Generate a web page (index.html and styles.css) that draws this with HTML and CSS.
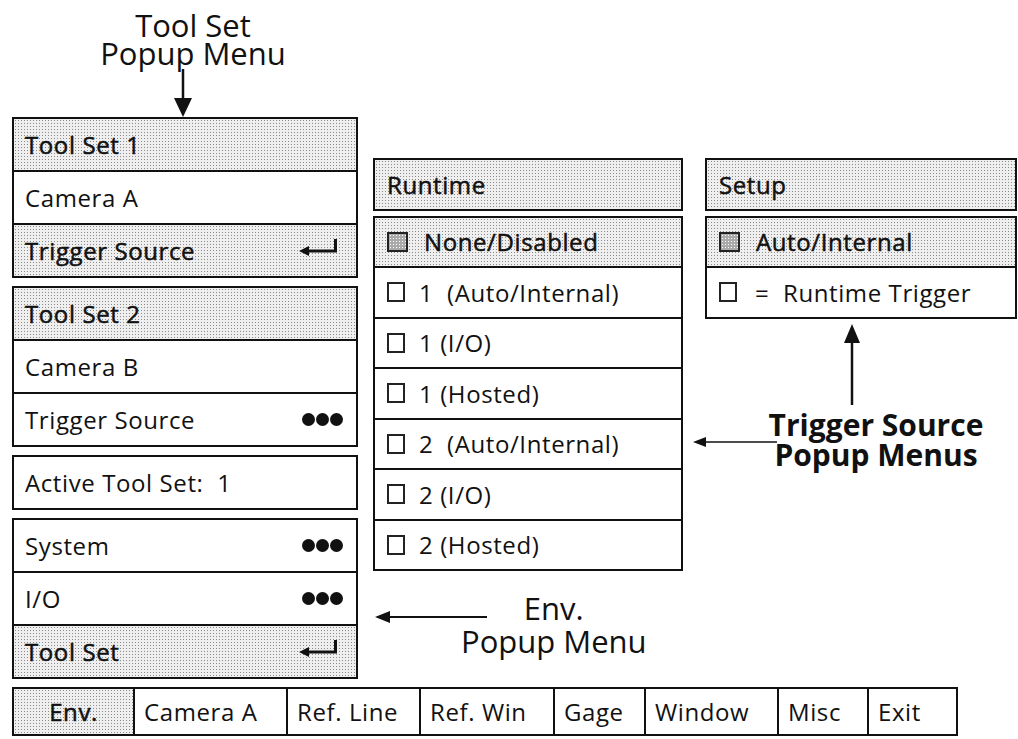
FILE: index.html
```html
<!DOCTYPE html>
<html lang="en">
<head>
  <meta charset="UTF-8" />
  <title>Trigger Source Popup Menus</title>
  <link rel="stylesheet" href="styles.css">
</head>
<body>
<div class="page">
  <div class="columns">

    <!-- Tool Set / Env. popup menus -->
    <div class="col-left">
      <div class="callout-top">
        <p>Tool Set<br>Popup Menu</p>
        <svg class="arrow-down" width="20" height="48" viewBox="0 0 20 48">
          <path d="M10 0V30" stroke="#111" stroke-width="2.5"/>
          <path d="M1 29H19L10 48Z" fill="#111"/>
        </svg>
      </div>

      <div class="stack">
        <div class="menu">
          <div class="row shaded"><span>Tool Set 1</span></div>
          <div class="row"><span>Camera A</span></div>
          <div class="row shaded"><span>Trigger Source</span><svg class="icon ret" width="38" height="17" viewBox="0 0 38 17"><path d="M8 12H36.5V0" fill="none" stroke="#111" stroke-width="3"/><path d="M0 12L10 7V17Z" fill="#111"/></svg></div>
        </div>

        <div class="menu">
          <div class="row shaded"><span>Tool Set 2</span></div>
          <div class="row"><span>Camera B</span></div>
          <div class="row"><span>Trigger Source</span><svg class="icon" width="41" height="13" viewBox="0 0 41 13"><circle cx="6.5" cy="6.5" r="6.5"/><circle cx="20.5" cy="6.5" r="6.5"/><circle cx="34.5" cy="6.5" r="6.5"/></svg></div>
        </div>

        <div class="menu">
          <div class="row"><span>Active Tool Set:&nbsp; 1</span></div>
        </div>

        <div class="menu">
          <div class="row"><span>System</span><svg class="icon" width="41" height="13" viewBox="0 0 41 13"><circle cx="6.5" cy="6.5" r="6.5"/><circle cx="20.5" cy="6.5" r="6.5"/><circle cx="34.5" cy="6.5" r="6.5"/></svg></div>
          <div class="row"><span>I/O</span><svg class="icon" width="41" height="13" viewBox="0 0 41 13"><circle cx="6.5" cy="6.5" r="6.5"/><circle cx="20.5" cy="6.5" r="6.5"/><circle cx="34.5" cy="6.5" r="6.5"/></svg></div>
          <div class="row shaded"><span>Tool Set</span><svg class="icon ret" width="38" height="17" viewBox="0 0 38 17"><path d="M8 12H36.5V0" fill="none" stroke="#111" stroke-width="3"/><path d="M0 12L10 7V17Z" fill="#111"/></svg></div>
        </div>
      </div>
    </div>

    <!-- Runtime trigger menu -->
    <div class="col-mid">
      <div class="menu">
        <div class="row shaded"><span>Runtime</span></div>
      </div>
      <div class="menu">
        <div class="row shaded"><span class="box on"></span><span>None/Disabled</span></div>
        <div class="row"><span class="box"></span><span>1&nbsp; (Auto/Internal)</span></div>
        <div class="row"><span class="box"></span><span>1 (I/O)</span></div>
        <div class="row"><span class="box"></span><span>1 (Hosted)</span></div>
        <div class="row"><span class="box"></span><span>2&nbsp; (Auto/Internal)</span></div>
        <div class="row"><span class="box"></span><span>2 (I/O)</span></div>
        <div class="row"><span class="box"></span><span>2 (Hosted)</span></div>
      </div>

      <div class="callout-env">
        <svg class="arrow-left" width="112" height="14" viewBox="0 0 112 14">
          <path d="M10 7H112" stroke="#111" stroke-width="2"/>
          <path d="M0 7L15 1V13Z" fill="#111"/>
        </svg>
        <span class="label">Env.<br>Popup Menu</span>
      </div>
    </div>

    <!-- Setup trigger menu -->
    <div class="col-right">
      <div class="menu">
        <div class="row shaded"><span>Setup</span></div>
      </div>
      <div class="menu">
        <div class="row shaded"><span class="box on"></span><span>Auto/Internal</span></div>
        <div class="row"><span class="box"></span><span class="eq">=&nbsp; Runtime Trigger</span></div>
      </div>

      <svg class="arrow-up" width="20" height="81" viewBox="0 0 20 81">
        <path d="M10 16V81" stroke="#111" stroke-width="2.5"/>
        <path d="M2 19H18L10 0Z" fill="#111"/>
      </svg>

      <div class="callout-trigger">
        <svg class="arrow-short" width="84" height="14" viewBox="0 0 84 14">
          <path d="M8 7H84" stroke="#111" stroke-width="1.6"/>
          <path d="M0 7L13 2V12Z" fill="#111"/>
        </svg>
        <span class="label">Trigger Source<br>Popup Menus</span>
      </div>
    </div>
  </div>

  <div class="tabbar">
    <div class="tab shaded">Env.</div>
    <div class="tab">Camera A</div>
    <div class="tab">Ref. Line</div>
    <div class="tab">Ref. Win</div>
    <div class="tab">Gage</div>
    <div class="tab">Window</div>
    <div class="tab">Misc</div>
    <div class="tab">Exit</div>
  </div>
</div>
</body>
</html>
```

FILE: styles.css
```css
body {
  margin: 0;
  background: #fff;
  color: #111;
  font-family: "Open Sans", "Liberation Sans", sans-serif;
}

.page {
  padding-left: 12px;
}

.columns {
  display: flex;
  align-items: flex-start;
}

/* columns */
.col-left {
  width: 346px;
}

.col-mid {
  width: 310px;
  margin-left: 15px;
  margin-top: 158px;
  display: flex;
  flex-direction: column;
  gap: 5px;
}

.col-right {
  width: 312px;
  margin-left: 22px;
  margin-top: 158px;
  display: flex;
  flex-direction: column;
  gap: 5px;
}

.stack {
  display: flex;
  flex-direction: column;
  gap: 8px;
}

/* menus */
.menu {
  border: 2px solid #111;
  background: #fff;
}

.row {
  height: 51px;
  display: flex;
  align-items: center;
  padding: 0 13px 0 11px;
  font-size: 24px;
  letter-spacing: 0.6px;
  white-space: nowrap;
}

.row + .row {
  border-top: 2px solid #111;
}

.col-mid .row,
.col-right .row {
  height: 48.5px;
  padding-left: 12px;
}

.shaded {
  background-color: #efefef;
  background-image: radial-gradient(circle, #8a8a8a 0.6px, transparent 1px);
  background-size: 3px 3px;
  -webkit-text-stroke: 0.5px #111;
}

.icon {
  margin-left: auto;
  fill: #111;
  flex: none;
}

.icon.ret {
  margin-right: 6px;
  margin-bottom: 6px;
}

/* check boxes */
.box {
  box-sizing: border-box;
  flex: none;
  width: 18px;
  height: 20px;
  border: 2px solid #222;
  margin-right: 14px;
  background: #fff;
}

.box.on {
  width: 21px;
  margin-right: 16px;
  background-color: #aaa;
  background-image: radial-gradient(circle, #fff 0.7px, transparent 1px);
  background-size: 3px 3px;
}

.eq {
  margin-left: 4px;
}

/* callouts */
.callout-top {
  height: 117px;
  display: flex;
  flex-direction: column;
  align-items: center;
}

.callout-top p {
  margin: 11px 0 0 16px;
  font-size: 31px;
  line-height: 28px;
  text-align: center;
}

.arrow-down {
  margin-top: auto;
  margin-left: -4px;
}

.callout-env {
  position: relative;
  margin-top: 16px;
  padding-left: 88px;
  font-size: 31px;
  line-height: 33px;
}

.callout-env .label {
  display: inline-block;
  text-align: center;
}

.arrow-left {
  position: absolute;
  left: 2px;
  top: 18px;
}

.arrow-up {
  margin-left: 137px;
}

.callout-trigger {
  position: relative;
  padding-left: 30px;
  font-size: 30px;
  font-weight: 700;
  line-height: 30px;
  text-align: center;
}

.arrow-short {
  position: absolute;
  left: -12px;
  top: 25px;
}

/* bottom tab bar */
.tabbar {
  box-sizing: border-box;
  display: grid;
  grid-template-columns: 119px 153px 133px 134px 91px 133px 90px 89px;
  width: max-content;
  height: 49px;
  margin-top: 8px;
  border: 2px solid #111;
}

.tab {
  box-sizing: border-box;
  display: flex;
  align-items: center;
  padding-left: 9px;
  font-size: 24px;
  letter-spacing: 0.6px;
  border-left: 2px solid #111;
}

.tab:first-child {
  border-left: 0;
  justify-content: center;
  padding-left: 0;
}
```
